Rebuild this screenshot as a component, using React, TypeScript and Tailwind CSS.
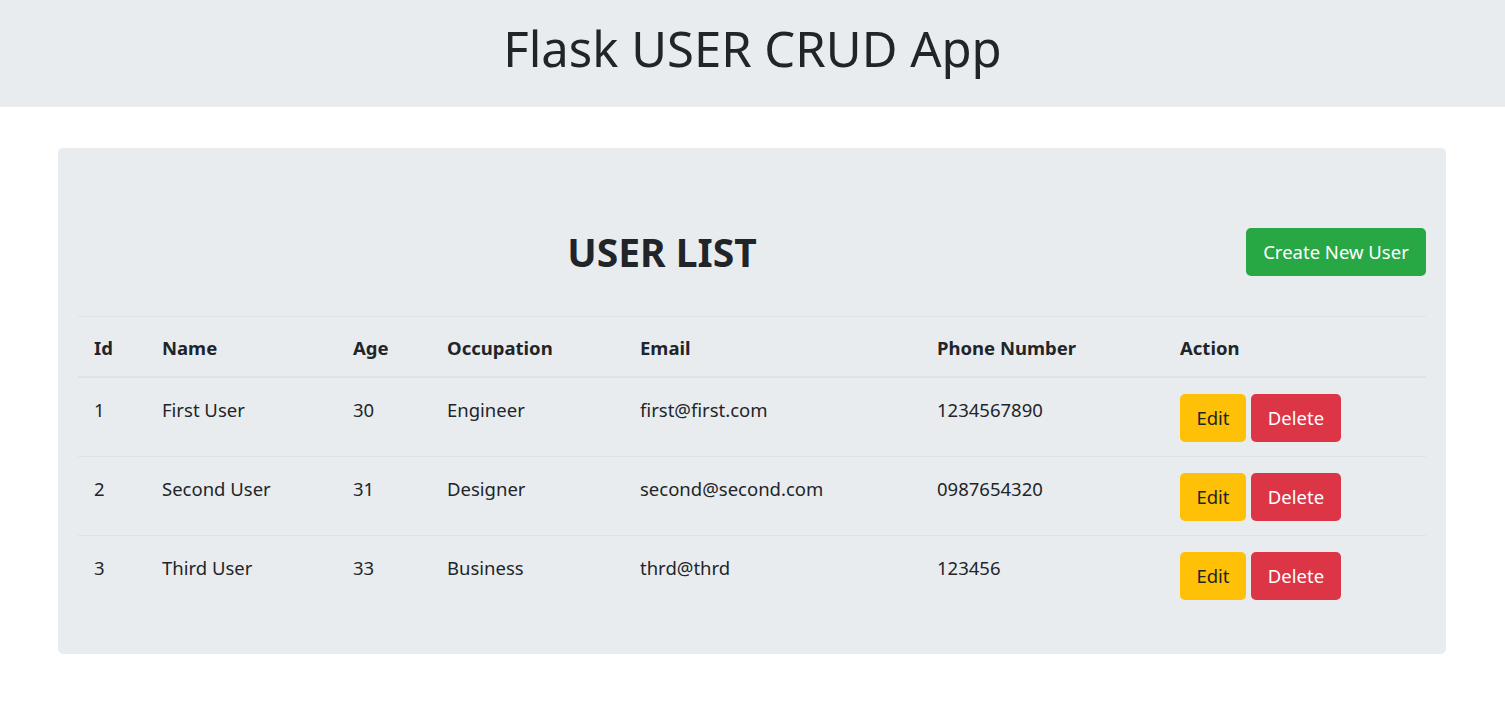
import React from "react";

const users = [
  { id: 1, name: "First User", age: 30, occupation: "Engineer", email: "first@first.com", phone: "1234567890" },
  { id: 2, name: "Second User", age: 31, occupation: "Designer", email: "second@second.com", phone: "0987654320" },
  { id: 3, name: "Third User", age: 33, occupation: "Business", email: "thrd@thrd", phone: "123456" },
];

export default function App() {
  return (
    <div className="min-h-[706px] bg-white text-[#212529]" style={{ fontFamily: '"Noto Sans", "Open Sans", sans-serif' }}>
      <header className="h-[107px] bg-[#e9ecef] pt-[19px] text-center">
        <h1 className="text-[49px] leading-[59px] font-normal">Flask USER CRUD App</h1>
      </header>

      <main className="ml-[58px] mr-[59px] mt-[41px] rounded-[5px] bg-[#e9ecef] px-[20px] pt-[80px] pb-[40px]">
        <div className="mb-[40px] flex items-center">
          <h2 className="flex-1 text-center text-[39px] leading-[48px] font-bold">USER LIST</h2>
          <button className="h-[48px] w-[180px] rounded-[5px] bg-[#28a745] text-[18.5px] leading-[30px] text-white">
            Create New User
          </button>
        </div>

        <table className="w-full table-fixed border-collapse text-left text-[18.5px] leading-[30px]">
          <colgroup>
            <col className="w-[72px]" />
            <col className="w-[191px]" />
            <col className="w-[94px]" />
            <col className="w-[193px]" />
            <col className="w-[297px]" />
            <col className="w-[243px]" />
            <col className="w-[258px]" />
          </colgroup>
          <thead>
            <tr className="border-t border-b-2 border-t-[#dee2e6] border-b-[#dee2e6]">
              <th className="pl-[16px] pr-[12px] pt-[16px] pb-[13px] font-bold">Id</th>
              <th className="px-[12px] pt-[16px] pb-[13px] font-bold">Name</th>
              <th className="px-[12px] pt-[16px] pb-[13px] font-bold">Age</th>
              <th className="px-[12px] pt-[16px] pb-[13px] font-bold">Occupation</th>
              <th className="px-[12px] pt-[16px] pb-[13px] font-bold">Email</th>
              <th className="px-[12px] pt-[16px] pb-[13px] font-bold">Phone Number</th>
              <th className="px-[12px] pt-[16px] pb-[13px] font-bold">Action</th>
            </tr>
          </thead>
          <tbody>
            {users.map((u, i) => (
              <tr key={u.id} className={i === 0 ? "" : "border-t border-[#dee2e6]"}>
                <td className="pl-[16px] pr-[12px] pt-[17px] pb-[12px] align-top">{u.id}</td>
                <td className="px-[12px] pt-[17px] pb-[12px] align-top">{u.name}</td>
                <td className="px-[12px] pt-[17px] pb-[12px] align-top">{u.age}</td>
                <td className="px-[12px] pt-[17px] pb-[12px] align-top">{u.occupation}</td>
                <td className="px-[12px] pt-[17px] pb-[12px] align-top">{u.email}</td>
                <td className="px-[12px] pt-[17px] pb-[12px] align-top">{u.phone}</td>
                <td className="px-[12px] pt-[16px] pb-[14px] align-top">
                  <div className="flex gap-[5px]">
                    <button className="h-[48px] w-[66px] rounded-[5px] bg-[#ffc107] text-[18.5px] leading-[30px] text-[#212529]">
                      Edit
                    </button>
                    <button className="h-[48px] w-[90px] rounded-[5px] bg-[#dc3545] text-[18.5px] leading-[30px] text-white">
                      Delete
                    </button>
                  </div>
                </td>
              </tr>
            ))}
          </tbody>
        </table>
      </main>
    </div>
  );
}
